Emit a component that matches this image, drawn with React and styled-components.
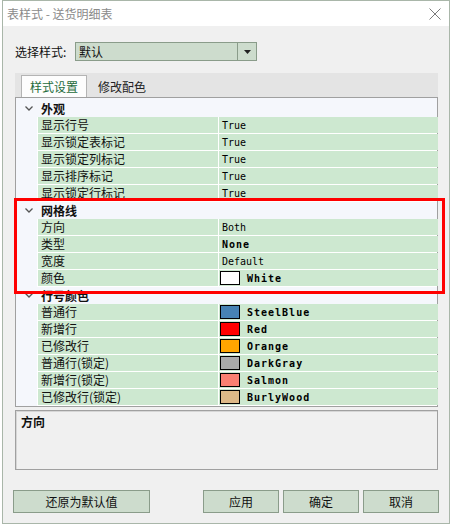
import React from 'react';
import styled, {createGlobalStyle} from 'styled-components';

const GlobalStyle = createGlobalStyle`
    body {
        margin: 0;
        background: #ffffff;
        font-family: "Noto Sans CJK SC", "Liberation Sans", sans-serif;
        font-size: 12px;
        color: #111;
    }
`;

const Window = styled.div`
    position: relative;
    box-sizing: border-box;
    width: 448px;
    height: 524px;
    margin-left: 2px;
    border: 1px solid #a9b6a9;
    background: #f0f0f0;
    display: flex;
    flex-direction: column;
`;

const TitleBar = styled.div`
    height: 25px;
    background: #ffffff;
    display: flex;
    align-items: center;
    justify-content: space-between;
    padding: 0 8px 0 4px;
    color: #8a8a8a;
    font-size: 12px;
`;

const Body = styled.div`
    flex: 1;
    display: flex;
    flex-direction: column;
    padding: 16px 11px 0 12px;
`;

const StyleRow = styled.div`
    display: flex;
    align-items: center;
    height: 19px;
`;

const Label = styled.span`
    width: 60px;
`;

const Combo = styled.div`
    box-sizing: border-box;
    width: 182px;
    height: 19px;
    border: 1px solid #8a9c8a;
    background: #cddccd;
    display: flex;
    align-items: center;
`;

const ComboText = styled.span`
    flex: 1;
    padding-left: 3px;
`;

const ComboButton = styled.div`
    width: 18px;
    height: 100%;
    border-left: 1px solid #8a9c8a;
    display: flex;
    align-items: center;
    justify-content: center;
`;

const TabStrip = styled.div`
    margin-top: 12px;
    width: 423px;
    height: 24px;
    background: #e4e4e4;
    display: flex;
    align-items: flex-end;
    padding-left: 6px;
    box-sizing: border-box;
`;

const Tab = styled.div`
    box-sizing: border-box;
    height: 22px;
    display: flex;
    align-items: center;
    padding: 0 ${p => (p.active ? '8px' : '10px')};
    background: ${p => (p.active ? '#fdfdfd' : 'transparent')};
    border: 1px solid ${p => (p.active ? '#b4b4b4' : 'transparent')};
    border-bottom: none;
    color: ${p => (p.active ? '#246b3b' : '#222')};
    font-size: 12px;
`;

const Grid = styled.div`
    box-sizing: border-box;
    width: 423px;
    height: 310px;
    border: 1px solid #a0a0a0;
    background: #f5f7fc;
    padding-top: 2px;
`;

const Row = styled.div`
    display: grid;
    grid-template-columns: 21px 180px 219px;
    column-gap: 1px;
    height: 17px;
    background: ${p => (p.category ? '#f5f7fc' : '#ffffff')};
`;

const Gutter = styled.div`
    background: #f5f7fc;
    display: flex;
    align-items: center;
    justify-content: center;
    padding-left: 4px;
`;

const CategoryName = styled.div`
    grid-column: 2 / 4;
    padding-left: 3px;
    font-weight: bold;
    line-height: 17px;
`;

const NameCell = styled.div`
    height: 16px;
    background: #cde8d0;
    padding-left: 3px;
    line-height: 16px;
    white-space: nowrap;
`;

const ValueCell = styled.div`
    height: 16px;
    background: #cde8d0;
    padding-left: ${p => (p.swatch ? '1px' : '3px')};
    display: flex;
    align-items: center;
    font-family: "DejaVu Sans Mono", "Liberation Mono", monospace;
    font-size: 10px;
    font-weight: ${p => (p.bold ? 'bold' : 'normal')};
    letter-spacing: ${p => (p.bold ? '1px' : '0')};
    color: #000;
`;

const Swatch = styled.span`
    box-sizing: border-box;
    width: 20px;
    height: 14px;
    border: 1px solid #000;
    background: ${p => p.color};
    margin-right: 7px;
`;

const Description = styled.div`
    box-sizing: border-box;
    margin-top: 3px;
    width: 423px;
    height: 60px;
    border: 1px solid #a0a0a0;
    box-shadow: inset 1px 1px 0 #d6d6d6;
    padding: 2px 5px;
    font-weight: bold;
`;

const ButtonBar = styled.div`
    display: flex;
    margin-top: 20px;
    margin-left: -2px;
    width: 426px;
`;

const Button = styled.div`
    box-sizing: border-box;
    width: ${p => p.width || 76}px;
    height: 23px;
    background: #cddccd;
    border: 1px solid #8a9c8a;
    display: flex;
    align-items: center;
    justify-content: center;
    margin-left: ${p => p.gap || 0}px;
`;

const Highlight = styled.div`
    position: absolute;
    left: 11px;
    top: 197px;
    width: 431px;
    height: 96px;
    box-sizing: border-box;
    border: 3px solid #ff0000;
    pointer-events: none;
`;

const Chevron = () => (
    <svg width="8" height="5" viewBox="0 0 8 5">
        <path d="M0.5 0.5 L4 4 L7.5 0.5" fill="none" stroke="#555" strokeWidth="1.3"/>
    </svg>
);

const sections = [
    {
        title: '外观',
        rows: [
            {name: '显示行号', value: 'True'},
            {name: '显示锁定表标记', value: 'True'},
            {name: '显示锁定列标记', value: 'True'},
            {name: '显示排序标记', value: 'True'},
            {name: '显示锁定行标记', value: 'True'},
        ],
    },
    {
        title: '网格线',
        rows: [
            {name: '方向', value: 'Both'},
            {name: '类型', value: 'None', bold: true},
            {name: '宽度', value: 'Default'},
            {name: '颜色', value: 'White', bold: true, color: '#ffffff'},
        ],
    },
    {
        title: '行号颜色',
        rows: [
            {name: '普通行', value: 'SteelBlue', bold: true, color: '#4682b4'},
            {name: '新增行', value: 'Red', bold: true, color: '#ff0000'},
            {name: '已修改行', value: 'Orange', bold: true, color: '#ffa500'},
            {name: '普通行(锁定)', value: 'DarkGray', bold: true, color: '#a9a9a9'},
            {name: '新增行(锁定)', value: 'Salmon', bold: true, color: '#fa8072'},
            {name: '已修改行(锁定)', value: 'BurlyWood', bold: true, color: '#deb887'},
        ],
    },
];

export default function App() {
    return (
        <>
            <GlobalStyle/>
            <Window>
                <TitleBar>
                    <span>表样式 - 送货明细表</span>
                    <svg width="12" height="12" viewBox="0 0 12 12">
                        <path d="M0.5 0.5 L11.5 11.5 M11.5 0.5 L0.5 11.5" stroke="#7a7a7a" strokeWidth="1"/>
                    </svg>
                </TitleBar>
                <Body>
                    <StyleRow>
                        <Label>选择样式:</Label>
                        <Combo>
                            <ComboText>默认</ComboText>
                            <ComboButton>
                                <svg width="7" height="4" viewBox="0 0 7 4">
                                    <path d="M0 0 H7 L3.5 4 Z" fill="#222"/>
                                </svg>
                            </ComboButton>
                        </Combo>
                    </StyleRow>

                    <TabStrip>
                        <Tab active>样式设置</Tab>
                        <Tab>修改配色</Tab>
                    </TabStrip>

                    <Grid>
                        {sections.map(section => (
                            <React.Fragment key={section.title}>
                                <Row category>
                                    <Gutter><Chevron/></Gutter>
                                    <CategoryName>{section.title}</CategoryName>
                                </Row>
                                {section.rows.map(row => (
                                    <Row key={row.name}>
                                        <Gutter/>
                                        <NameCell>{row.name}</NameCell>
                                        <ValueCell bold={row.bold} swatch={!!row.color}>
                                            {row.color && <Swatch color={row.color}/>}
                                            {row.value}
                                        </ValueCell>
                                    </Row>
                                ))}
                            </React.Fragment>
                        ))}
                    </Grid>

                    <Description>方向</Description>

                    <ButtonBar>
                        <Button width={137}>还原为默认值</Button>
                        <Button gap={53}>应用</Button>
                        <Button gap={4}>确定</Button>
                        <Button gap={4}>取消</Button>
                    </ButtonBar>
                </Body>
                <Highlight/>
            </Window>
        </>
    );
}
